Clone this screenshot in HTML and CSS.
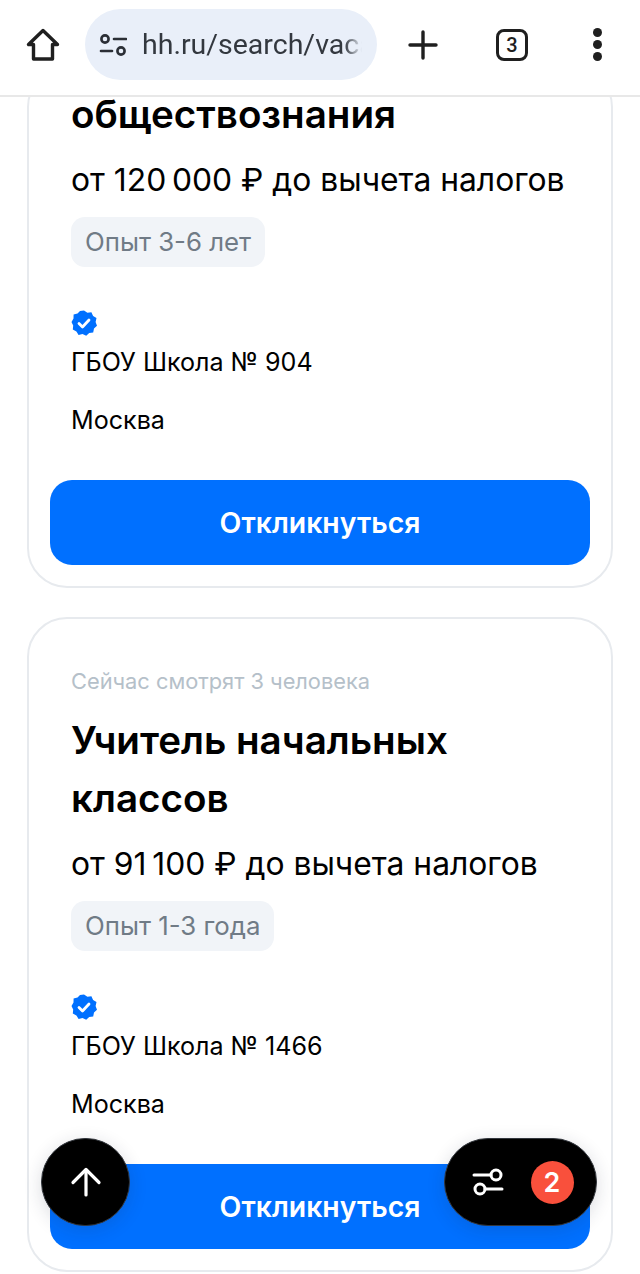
FILE: index.html
```html
<!DOCTYPE html>
<html lang="ru">
<head>
    <meta charset="UTF-8">
    <meta name="viewport" content="width=device-width, initial-scale=1.0">
    <title>hh.ru</title>
    <link rel="stylesheet" href="styles.css">
</head>
<body>
    <header class="toolbar">
        <button class="tool home">
            <svg width="36" height="36" viewBox="0 0 36 36" fill="none" stroke="#1f1f1f" stroke-width="3.4" stroke-linejoin="round" stroke-linecap="round"><path d="M18 3.5 3.5 17.5H8.5V32H27.5V17.5H32.5Z"/></svg>
        </button>
        <div class="address">
            <svg width="28" height="28" viewBox="0 0 28 28" fill="none" stroke="#2b2f36" stroke-width="2.6" stroke-linecap="round"><circle cx="6" cy="8" r="3.6"/><path d="M15 8H27"/><path d="M2 20H13"/><circle cx="22" cy="20" r="3.6"/></svg>
            <span class="url">hh.ru/search/vacancy</span>
        </div>
        <button class="tool plus">
            <svg width="32" height="32" viewBox="0 0 32 32" fill="none" stroke="#1f1f1f" stroke-width="3.4" stroke-linecap="round"><path d="M16 3V29"/><path d="M3 16H29"/></svg>
        </button>
        <button class="tool tabs"><span class="tab-count">3</span></button>
        <button class="tool more"><span class="dot"></span><span class="dot"></span><span class="dot"></span></button>
    </header>

    <main class="results">
        <section class="card card-cut">
            <h2 class="title">обществознания</h2>
            <p class="salary">от 120&#8201;000 ₽ до вычета налогов</p>
            <span class="exp">Опыт 3-6 лет</span>
            <svg class="verified" width="28" height="28" viewBox="0 0 28 28"><path fill="#0070ff" d="M14 1.5l3.4 2.2 4-.4 1.7 3.7 3.4 2.1-.9 3.9 1.4 3.8-3 2.7-.8 4-4 .5-3 2.7-3.7-1.6-3.9.8-2.2-3.4-3.6-1.9.4-4L1.500 13l2-3.500.1-4 3.900-1.100L10 1.900z"/><path fill="none" stroke="#fff" stroke-width="2.800" stroke-linecap="round" stroke-linejoin="round" d="M9 14.500l3.500 3.500 6.500-7"/></svg>
            <p class="company">ГБОУ Школа № 904</p>
            <p class="city">Москва</p>
            <button class="apply">Откликнуться</button>
        </section>

        <section class="card">
            <p class="viewers">Сейчас смотрят 3 человека</p>
            <h2 class="title">Учитель начальных классов</h2>
            <p class="salary">от 91&#8201;100 ₽ до вычета налогов</p>
            <span class="exp">Опыт 1-3 года</span>
            <svg class="verified" width="28" height="28" viewBox="0 0 28 28"><path fill="#0070ff" d="M14 1.5l3.4 2.2 4-.4 1.7 3.7 3.4 2.1-.9 3.9 1.4 3.8-3 2.7-.8 4-4 .5-3 2.7-3.7-1.6-3.9.8-2.2-3.4-3.6-1.9.4-4L1.500 13l2-3.500.1-4 3.900-1.100L10 1.900z"/><path fill="none" stroke="#fff" stroke-width="2.800" stroke-linecap="round" stroke-linejoin="round" d="M9 14.500l3.500 3.500 6.500-7"/></svg>
            <p class="company">ГБОУ Школа № 1466</p>
            <p class="city">Москва</p>
            <button class="apply">Откликнуться</button>
        </section>
    </main>

    <button class="fab fab-up">
        <svg width="34" height="34" viewBox="0 0 34 34" fill="none" stroke="#fff" stroke-width="3.200" stroke-linecap="round" stroke-linejoin="round"><path d="M17 30V5"/><path d="M4 17.500 17 4.500 30 17.500"/></svg>
    </button>
    <button class="fab fab-filter">
        <svg width="32" height="32" viewBox="0 0 32 32" fill="none" stroke="#fff" stroke-width="3" stroke-linecap="round"><circle cx="24" cy="9" r="5"/><path d="M19 9H2"/><circle cx="8" cy="23" r="5"/><path d="M13 23H30"/></svg>
        <span class="badge">2</span>
    </button>
</body>
</html>
```

FILE: styles.css
```css
* {
    box-sizing: border-box;
}

html, body {
    height: 1274px;
    overflow: hidden;
}

body {
    position: relative;
    margin: 0;
    background: #fff;
    color: #000;
    font-family: Inter, "Noto Sans", sans-serif;
}

button {
    border: none;
    background: none;
    padding: 0;
    font-family: inherit;
    cursor: pointer;
}

p, h2 {
    margin: 0;
}

/* Browser toolbar */
.toolbar {
    position: relative;
    z-index: 2;
    display: flex;
    align-items: center;
    height: 97px;
    padding: 0 0 6px 25px;
    background: #fff;
    border-bottom: 2px solid #e8e8e8;
}

.tool {
    display: flex;
    align-items: center;
    justify-content: center;
}

.home {
    width: 36px;
    height: 36px;
}

.address {
    display: flex;
    align-items: center;
    gap: 15px;
    width: 292px;
    height: 71px;
    margin-left: 24px;
    padding: 0 15px 0 14px;
    background: #e9eff9;
    border-radius: 36px;
}

.address svg {
    flex: none;
}

/* long address fades out at the end of the pill */
.url {
    overflow: hidden;
    white-space: nowrap;
    font-family: Roboto, sans-serif;
    font-size: 28.5px;
    color: #33383f;
    -webkit-mask-image: linear-gradient(to right, #000 92%, transparent);
    mask-image: linear-gradient(to right, #000 92%, transparent);
}

.plus {
    width: 32px;
    height: 32px;
    margin-left: 30px;
}

.tabs {
    width: 32px;
    height: 32px;
    margin-left: 57px;
    border: 3.5px solid #1f1f1f;
    border-radius: 8px;
}

.tab-count {
    font-family: Roboto, sans-serif;
    font-size: 20px;
    font-weight: 500;
    color: #1f1f1f;
}

.more {
    flex-direction: column;
    gap: 3px;
    width: 10px;
    margin-left: 64px;
}

.dot {
    width: 9px;
    height: 9px;
    border-radius: 50%;
    background: #1f1f1f;
}

/* Vacancy list */
.results {
    display: flex;
    flex-direction: column;
    gap: 29px;
    padding: 0 27px;
}

.card {
    display: flex;
    flex-direction: column;
    align-items: flex-start;
    padding: 47px 21px 21px;
    border: 2px solid #e7eaee;
    border-radius: 40px;
    background: #fff;
}

.card-cut {
    margin-top: -30px;
    padding-top: 16.5px;
}

.viewers {
    padding-left: 21px;
    font-size: 21.8px;
    line-height: 30px;
    color: #b5c0c9;
}

.title {
    width: 100%;
    padding: 0 21px;
    font-size: 38.6px;
    font-weight: 600;
    line-height: 57.5px;
}

.card .viewers + .title {
    margin-top: 16px;
}

.salary {
    margin-top: 15px;
    padding-left: 21px;
    font-size: 31.8px;
    line-height: 44px;
}

.exp {
    margin: 15px 0 0 21px;
    padding: 0 14px;
    height: 50px;
    border-radius: 14px;
    background: #f1f4f8;
    color: #707b86;
    font-size: 25.8px;
    line-height: 50px;
}

.verified {
    margin: 42px 0 0 20px;
}

.company,
.city {
    padding-left: 21px;
    font-size: 25.1px;
    line-height: 36px;
}

.company {
    margin-top: 7px;
}

.city {
    margin-top: 22px;
}

.apply {
    width: 100%;
    height: 85px;
    margin-top: 42px;
    border-radius: 22px;
    background: #0070ff;
    color: #fff;
    font-size: 28.4px;
    font-weight: 600;
}

/* Floating buttons */
.fab {
    position: absolute;
    top: 1138px;
    display: flex;
    align-items: center;
    height: 88px;
    border-radius: 44px;
    border: 1.5px solid #33373d;
    background: #000;
    box-shadow: 0 4px 18px rgba(30, 40, 60, .16);
}

.fab-up {
    left: 41px;
    width: 89px;
    justify-content: center;
}

.fab-filter {
    left: 444px;
    width: 153px;
    padding-left: 27px;
}

.badge {
    width: 43px;
    height: 43px;
    margin-left: 26.5px;
    border-radius: 50%;
    background: #f9503c;
    color: #fff;
    font-size: 27px;
    font-weight: 600;
    line-height: 43px;
    text-align: center;
}
```
